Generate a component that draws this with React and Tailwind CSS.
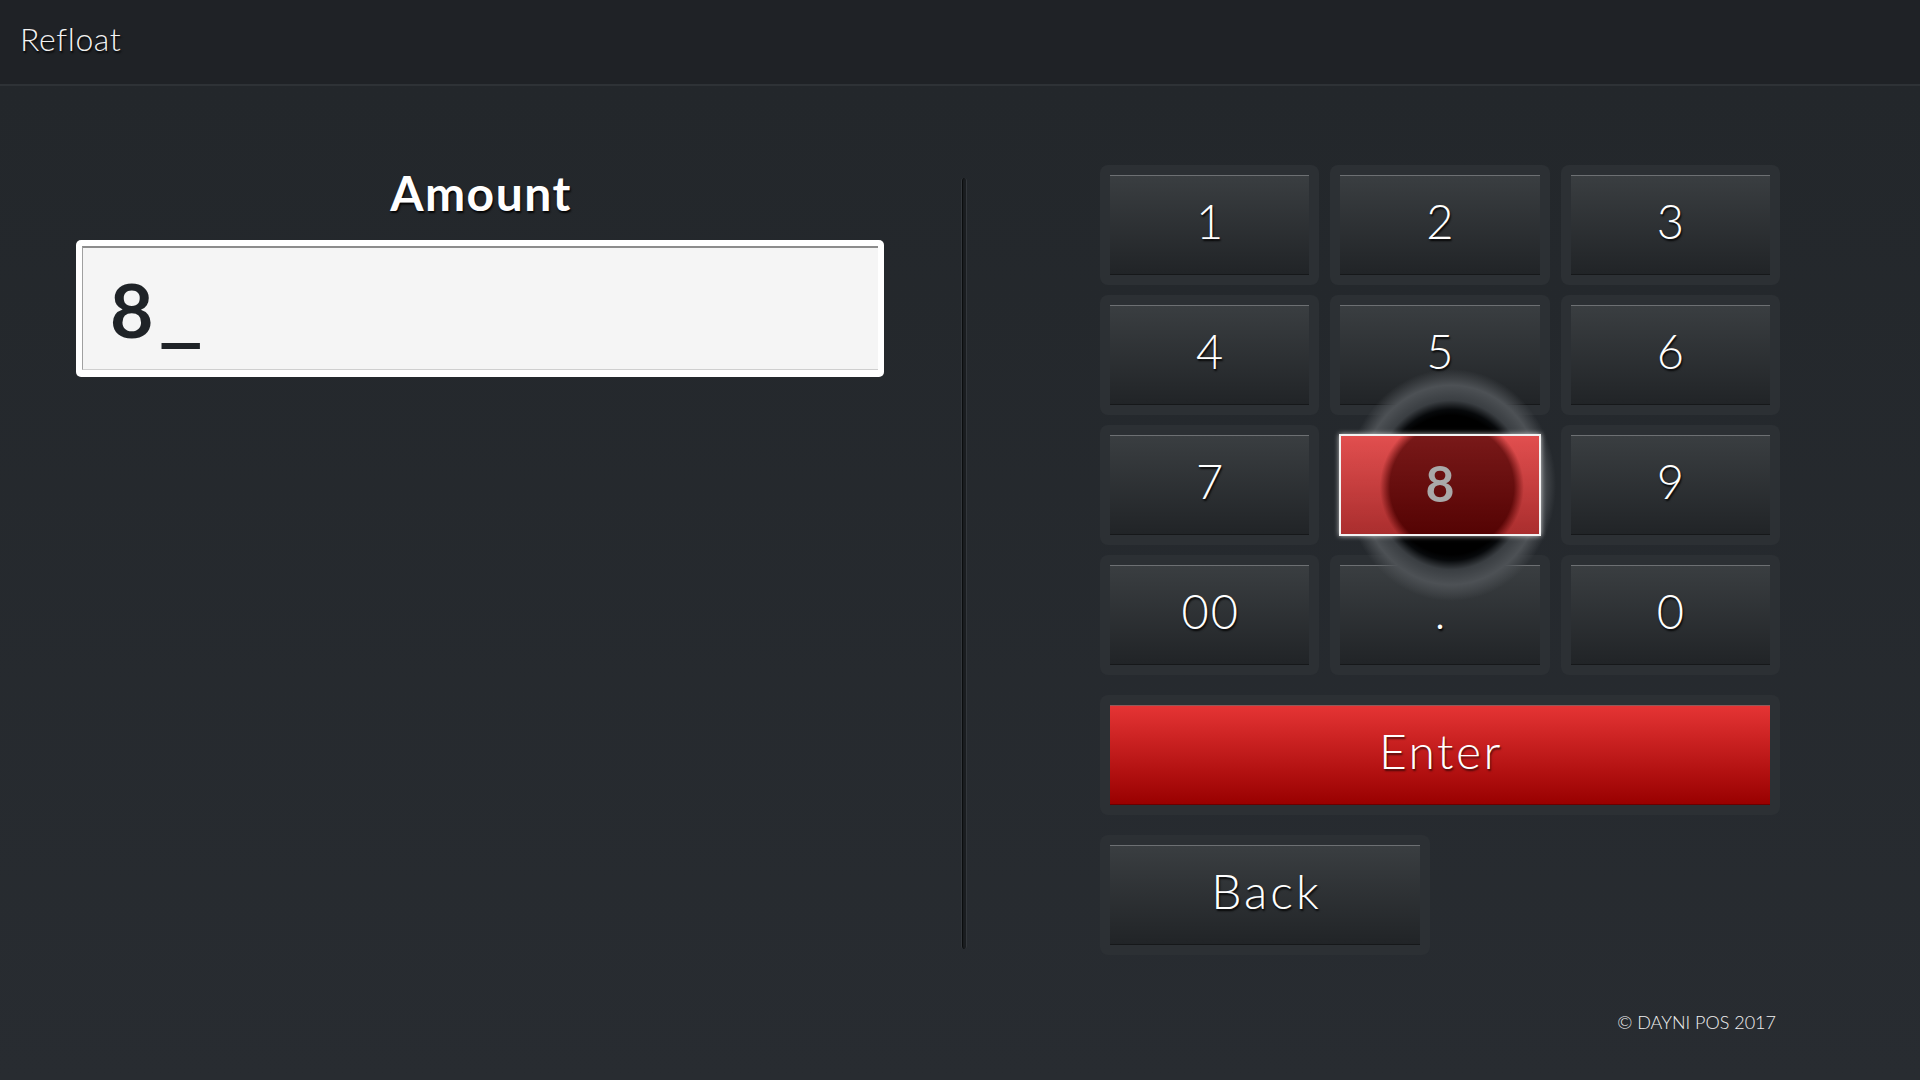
import React from "react";

const keys = ["1", "2", "3", "4", "5", "6", "7", "8", "9", "00", ".", "0"];

function Key({ label }) {
  return (
    <div className="h-[120px] rounded-[8px] bg-[#2c3034] p-[10px]">
      <div className="flex h-full w-full items-center justify-center border-t border-b border-t-[#6d7073] border-b-[#16181a] bg-[linear-gradient(to_bottom,#3a3e41,#212427)] pb-[8px] text-[47px] font-light leading-none text-white [text-shadow:1px_2px_2px_rgba(0,0,0,0.9)]">
        <span className={label.length > 1 ? "pl-[2px] tracking-[2px]" : ""}>{label}</span>
      </div>
    </div>
  );
}

function PressedKey({ label }) {
  return (
    <div className="relative h-[120px] p-[9px]">
      <div className="absolute left-[16px] top-[-56px] h-[232px] w-[210px] bg-[radial-gradient(closest-side,#000_0%,#000_60%,#07090b_65%,#3a3e42_73%,#4d5155_86%,rgba(77,81,85,0)_100%)]" />
      <div className="relative z-10 flex h-full w-full items-center justify-center border-2 border-[#f2f2f2] bg-[radial-gradient(circle_72px_at_56%_52%,rgba(0,0,0,0.45)_0%,rgba(0,0,0,0.45)_86%,rgba(255,255,255,0.16)_100%),linear-gradient(to_bottom,#dc2d2d,#9a0606)] pb-[4px] text-[50px] font-bold leading-none text-[#a9a9a9] shadow-[0_0_5px_rgba(255,255,255,0.7)]">
        {label}
      </div>
    </div>
  );
}

export default function App() {
  return (
    <div className="flex h-[1080px] w-[1920px] flex-col overflow-hidden bg-[#23272b] font-['Lato',sans-serif]">
      <header className="h-[86px] shrink-0 border-b-2 border-[#2e3236] bg-[#1f2226] pl-[20px] pt-[23px]">
        <div className="text-[32px] font-light leading-none tracking-[0.6px] text-[#f2f2f2] [text-shadow:1px_2px_2px_rgba(0,0,0,0.9)]">
          Refloat
        </div>
      </header>

      <main className="flex flex-1 bg-[linear-gradient(to_bottom,#23272b,#282c31)] pl-[76px]">
        <section className="w-[808px] shrink-0">
          <h1 className="mt-[83px] pl-[2px] text-center text-[48px] font-bold leading-none tracking-[1.5px] text-white [text-shadow:1px_2px_2px_rgba(0,0,0,0.9)]">
            Amount
          </h1>
          <div className="mt-[23px] h-[137px] rounded-[5px] bg-white px-[6px] pb-[7px] pt-[6px]">
            <div className="flex h-full items-center border-t-2 border-l border-b border-t-[#8c8c8c] border-l-[#a0a0a0] border-b-[#cfcfcf] bg-[#f5f5f5] pl-[27px] pt-[2px] text-[75px] font-bold leading-none text-[#1f2327]">
              <span>8</span>
              <span className="ml-[4px] inline-block origin-left scale-x-[1.3]">_</span>
            </div>
          </div>
        </section>

        <div className="ml-[77px] mt-[92px] h-[771px] w-[6px] shrink-0 rounded-full border-x border-[#33373c] bg-[#1a1d20] shadow-[inset_1px_0_1px_rgba(0,0,0,0.6)]" />

        <section className="ml-[133px] mt-[79px] w-[680px] shrink-0">
          <div className="grid grid-cols-3 gap-x-[11px] gap-y-[10px]">
            {keys.map((k) =>
              k === "8" ? <PressedKey key={k} label={k} /> : <Key key={k} label={k} />
            )}
          </div>

          <div className="mt-[20px] h-[120px] rounded-[8px] bg-[#2c3034] p-[10px]">
            <div className="flex h-full w-full items-center justify-center border-t border-b border-t-[#8f5a5a] border-b-[#6a0000] bg-[linear-gradient(to_bottom,#e53434,#990000)] pb-[8px] pl-[2px] text-[48px] font-light leading-none tracking-[2.5px] text-white [text-shadow:1px_2px_2px_rgba(0,0,0,0.6)]">
              Enter
            </div>
          </div>

          <div className="mt-[20px] h-[120px] w-[330px] rounded-[8px] bg-[#2c3034] p-[10px]">
            <div className="flex h-full w-full items-center justify-center border-t border-b border-t-[#6d7073] border-b-[#16181a] bg-[linear-gradient(to_bottom,#3a3e41,#212427)] pb-[8px] pl-[3px] text-[48px] font-light leading-none tracking-[3px] text-white [text-shadow:1px_2px_2px_rgba(0,0,0,0.9)]">
              Back
            </div>
          </div>

          <div className="mt-[58px] pr-[4px] text-right text-[18px] font-light leading-none text-[#f0f0f0]">
            © DAYNI POS 2017
          </div>
        </section>
      </main>
    </div>
  );
}
